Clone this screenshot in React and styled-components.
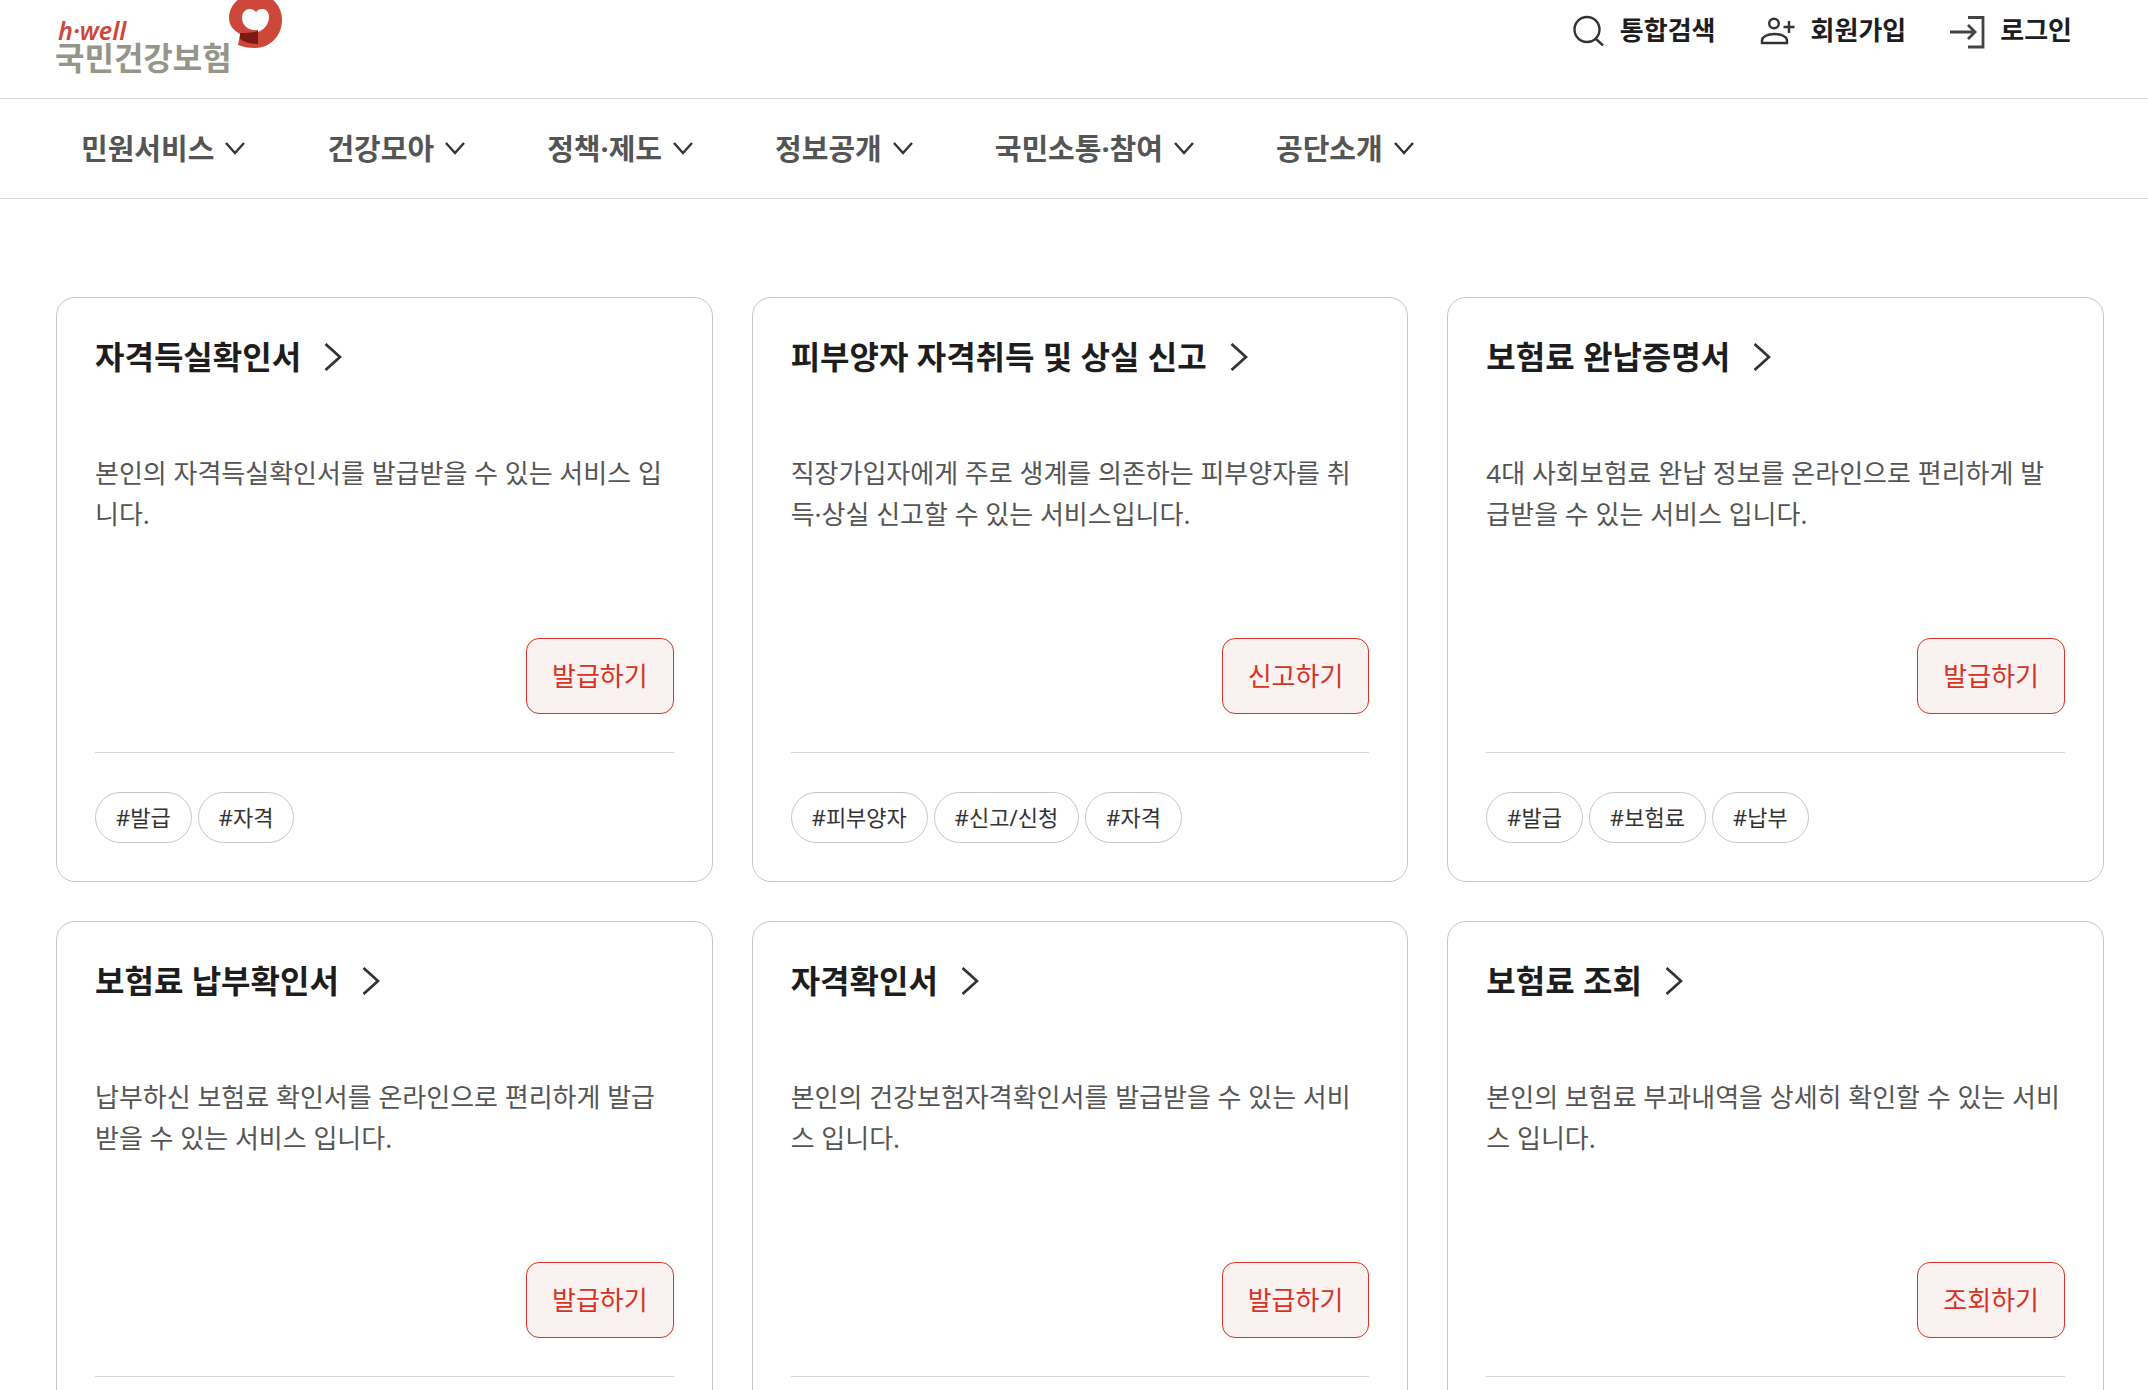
import React from "react";
import styled, { createGlobalStyle } from "styled-components";

const GlobalStyle = createGlobalStyle`
* {
    box-sizing: border-box;
}
html {
    scrollbar-width: none;
}
body {
    margin: 0;
    background: #fff;
    color: #1d1d1d;
    font-family: 'Noto Sans', 'Noto Sans CJK KR', sans-serif;
}
`
const TopBar = styled.header`
    display: flex;
    justify-content: space-between;
    align-items: flex-start;
    height: 99px;
    padding: 0 76px 0 55px;
    border-bottom: 1px solid #d8d8d8;
`
const Logo = styled.a`
    display: flex;
    text-decoration: none;
`
const LogoText = styled.span`
    display: flex;
    flex-direction: column;
    padding-top: 16px;
`
const LogoEn = styled.span`
    color: #cd483b;
    font-size: 25px;
    font-style: italic;
    font-weight: 600;
    line-height: 28px;
    padding-left: 3px;
`
const LogoKo = styled.span`
    color: #95958a;
    font-size: 32px;
    font-weight: 700;
    line-height: 28px;
    width: 172px;
    white-space: nowrap;
`
const Utils = styled.nav`
    display: flex;
    gap: 44px;
    padding-top: 10px;
`
const UtilLink = styled.a`
    display: flex;
    align-items: center;
    gap: 15px;
    color: #1d1d1d;
    font-size: 26px;
    font-weight: 700;
    line-height: 40px;
    text-decoration: none;
`
const MainNav = styled.nav`
    display: flex;
    align-items: center;
    gap: 82px;
    height: 100px;
    padding: 0 81px;
    border-bottom: 1px solid #d8d8d8;
`
const NavButton = styled.button`
    display: flex;
    align-items: center;
    gap: 11px;
    padding: 0;
    border: 0;
    background: none;
    color: #555;
    font: inherit;
    font-size: 29px;
    font-weight: 700;
    line-height: 40px;
`
const Cards = styled.main`
    display: grid;
    grid-template-columns: repeat(3, 1fr);
    gap: 39px;
    padding: 98px 44px 39px 56px;
`
const Card = styled.article`
    display: flex;
    flex-direction: column;
    padding: 38px;
    border: 1px solid #c6c6c6;
    border-radius: 19px;
`
const Title = styled.h2`
    margin: 0;
    font-size: 32px;
    font-weight: 700;
    line-height: 42px;
`
const TitleLink = styled.a`
    display: flex;
    align-items: center;
    gap: 23px;
    color: inherit;
    text-decoration: none;
`
const Desc = styled.p`
    height: 164px;
    margin: 75px 0 0;
    color: #555;
    font-size: 26px;
    line-height: 41px;
    word-break: break-all;
`
const Action = styled.button`
    align-self: flex-end;
    height: 76px;
    margin-top: 21px;
    padding: 0 25px 2px;
    border: 1px solid #d63324;
    border-radius: 13px;
    background: #faf2f1;
    color: #d63324;
    font: inherit;
    font-size: 26px;
`
const Tags = styled.ul`
    display: flex;
    gap: 6px;
    min-height: 91px;
    margin: 38px 0 0;
    padding: 39px 0 0;
    border-top: 1px solid #d8d8d8;
    list-style: none;
`
const Tag = styled.li`
    padding: 0 20px 1px;
    border: 1px solid #c6c6c6;
    border-radius: 26px;
    color: #333;
    font-size: 22px;
    line-height: 48px;
`

const menus = ["민원서비스", "건강모아", "정책·제도", "정보공개", "국민소통·참여", "공단소개"];

const services = [
    { title: "자격득실확인서", desc: "본인의 자격득실확인서를 발급받을 수 있는 서비스 입니다.", action: "발급하기", tags: ["발급", "자격"] },
    { title: "피부양자 자격취득 및 상실 신고", desc: "직장가입자에게 주로 생계를 의존하는 피부양자를 취득·상실 신고할 수 있는 서비스입니다.", action: "신고하기", tags: ["피부양자", "신고/신청", "자격"] },
    { title: "보험료 완납증명서", desc: "4대 사회보험료 완납 정보를 온라인으로 편리하게 발급받을 수 있는 서비스 입니다.", action: "발급하기", tags: ["발급", "보험료", "납부"] },
    { title: "보험료 납부확인서", desc: "납부하신 보험료 확인서를 온라인으로 편리하게 발급받을 수 있는 서비스 입니다.", action: "발급하기", tags: [] },
    { title: "자격확인서", desc: "본인의 건강보험자격확인서를 발급받을 수 있는 서비스 입니다.", action: "발급하기", tags: [] },
    { title: "보험료 조회", desc: "본인의 보험료 부과내역을 상세히 확인할 수 있는 서비스 입니다.", action: "조회하기", tags: [] },
];

const LogoMark = () => (
    <svg width="56" height="49" viewBox="0 0 56 49" aria-hidden="true">
        <path d="M28-6C43-6 55 4 55 20s-12 28-27 28c-7 0-12-1-17-3l2-11C6 30 2 25 2 18 2 5 13-6 28-6z" fill="#cd483b" />
        <path d="M13 33c7 0 12 0 18-2v13c-6 0-12-1-18-5z" fill="#7c1913" />
        <path d="M29 12c4-5 13-4 13 5 0 7-5 13-11 15v-2c-9 1-16-4-16-12 0-10 10-11 14-6z" fill="#fff" />
    </svg>
)
const SearchIcon = () => (
    <svg width="32" height="32" viewBox="0 0 32 32" fill="none" stroke="#333" strokeWidth="2.4" aria-hidden="true">
        <circle cx="14" cy="15.5" r="12.5" />
        <path d="M22.5 24.5l7.5 7" />
    </svg>
)
const JoinIcon = () => (
    <svg width="36" height="32" viewBox="0 0 36 32" fill="none" stroke="#333" strokeWidth="2.4" aria-hidden="true">
        <circle cx="14" cy="9.5" r="4.8" />
        <path d="M2 29v-2.500c0-4 6-6.500 12.500-6.500s12.500 2.500 12.500 6.500V29zM29 7v12M23.500 13h11" />
    </svg>
)
const LoginIcon = () => (
    <svg width="35" height="38" viewBox="0 0 35 38" fill="none" stroke="#444" strokeWidth="2.8" aria-hidden="true">
        <path d="M18 6.500h15v29.500H18M0 21h25M18 14l7 7-7 7" />
    </svg>
)
const ChevronDown = () => (
    <svg width="20" height="14" viewBox="0 0 20 14" fill="none" stroke="#333" strokeWidth="2.4" aria-hidden="true">
        <path d="M1 1l9 10L19 1" />
    </svg>
)
const ChevronRight = () => (
    <svg width="18" height="28" viewBox="0 0 18 28" fill="none" stroke="#333" strokeWidth="2.8" aria-hidden="true">
        <path d="M1.500 1l14.500 13-14.500 13" />
    </svg>
)

export default function App() {
    return (
        <>
            <GlobalStyle />
            <TopBar>
                <Logo href="#">
                    <LogoText>
                        <LogoEn>h·well</LogoEn>
                        <LogoKo>국민건강보험</LogoKo>
                    </LogoText>
                    <LogoMark />
                </Logo>
                <Utils>
                    <UtilLink href="#"><SearchIcon />통합검색</UtilLink>
                    <UtilLink href="#"><JoinIcon />회원가입</UtilLink>
                    <UtilLink href="#"><LoginIcon />로그인</UtilLink>
                </Utils>
            </TopBar>
            <MainNav>
                {menus.map(menu => (
                    <NavButton key={menu}>{menu}<ChevronDown /></NavButton>
                ))}
            </MainNav>
            <Cards>
                {services.map(item => (
                    <Card key={item.title}>
                        <Title><TitleLink href="#">{item.title}<ChevronRight /></TitleLink></Title>
                        <Desc>{item.desc}</Desc>
                        <Action>{item.action}</Action>
                        <Tags>
                            {item.tags.map(tag => <Tag key={tag}>#{tag}</Tag>)}
                        </Tags>
                    </Card>
                ))}
            </Cards>
        </>
    );
}
